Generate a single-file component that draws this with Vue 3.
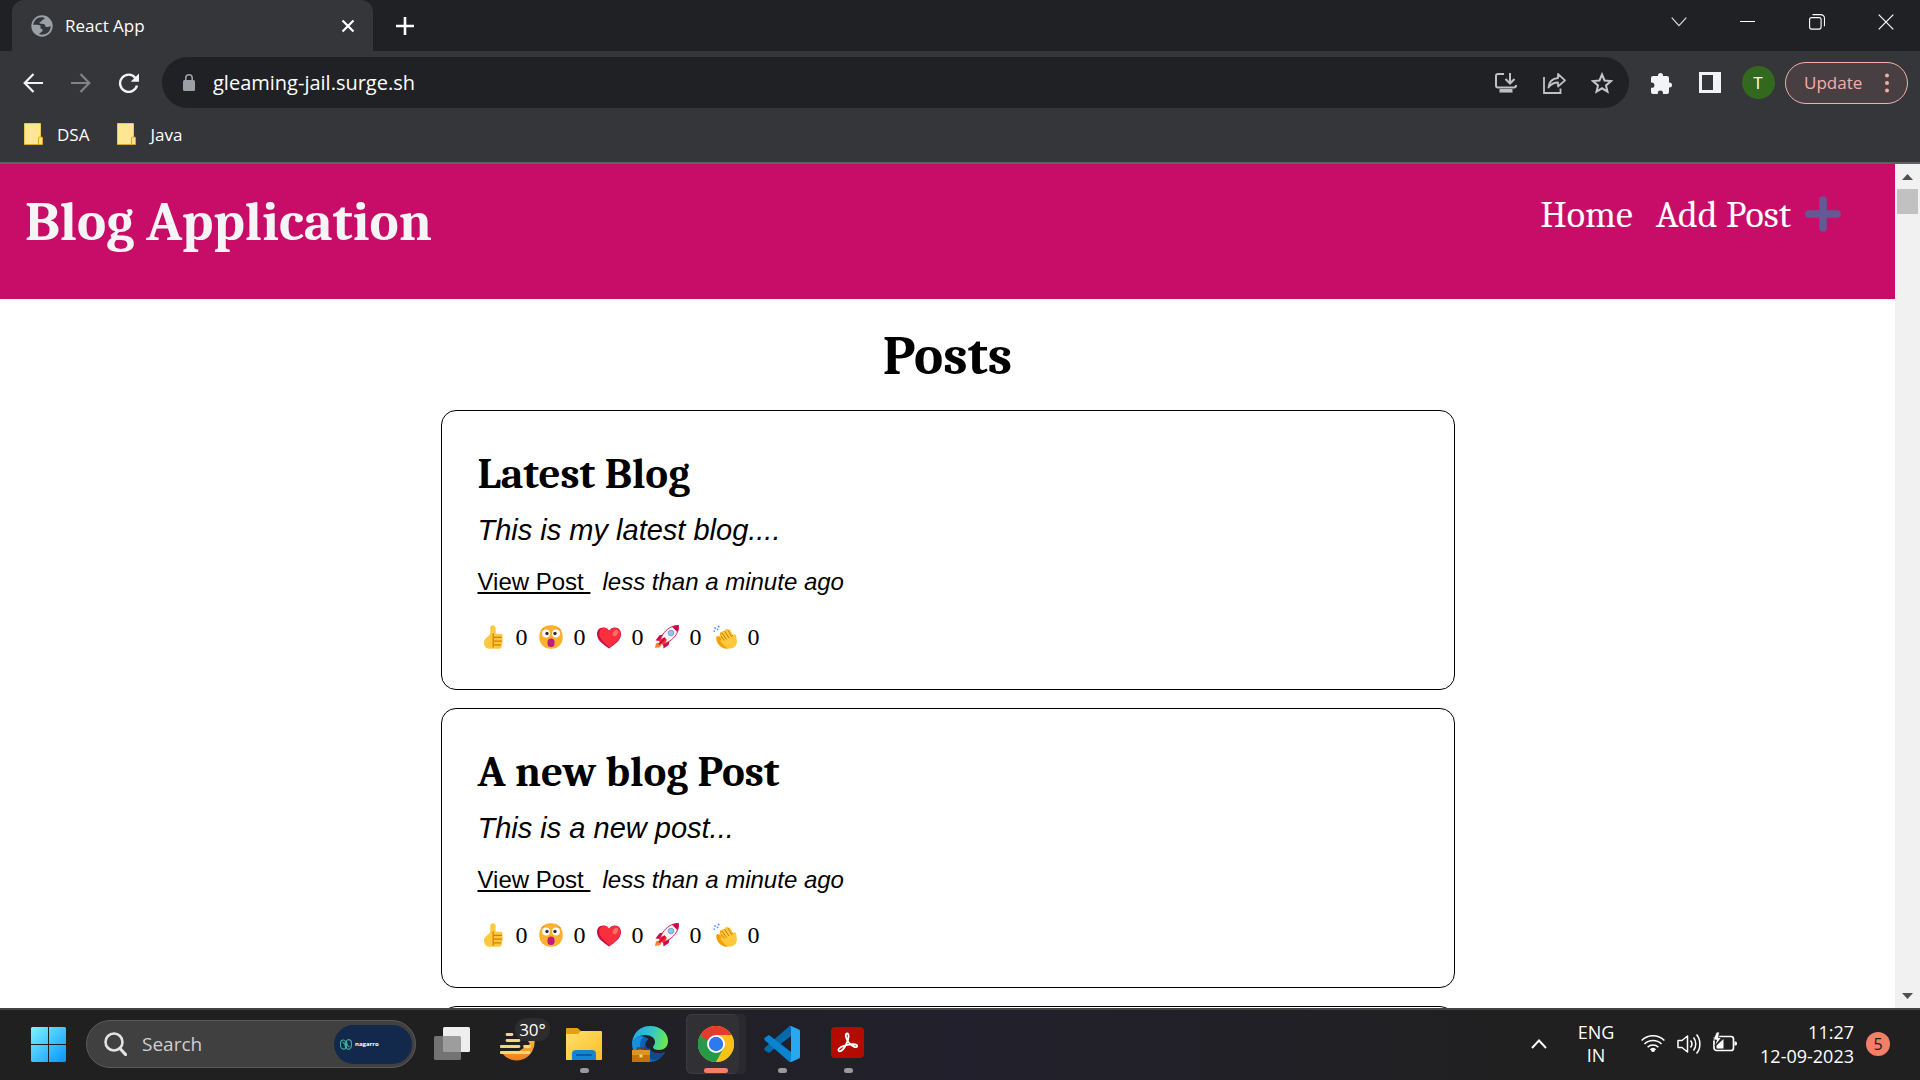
<script setup>
import { ref } from 'vue'

const url = ref('gleaming-jail.surge.sh')
const search = ref('')
const bookmarks = ['DSA', 'Java']
const reactions = ['thumb', 'wow', 'heart', 'rocket', 'clap']
const posts = [
  { id: 1, title: 'Latest Blog', excerpt: 'This is my latest blog....', age: 'less than a minute ago' },
  { id: 2, title: 'A new blog Post', excerpt: 'This is a new post...', age: 'less than a minute ago' },
  { id: 3 },
]
</script>

<template>
  <div class="desktop">
    <header class="tabs">
      <div class="tab">
        <svg class="globe" width="22" height="22" viewBox="0 0 22 22"><circle cx="11" cy="11" r="10.7" fill="#9aa0a6" /><path d="M2.300 10C2.600 5.500 6.500 2 11 2.300l2.500.4c.3 1.500-1 2-2.300 2.300-.5 1.800-1.900 1.900-2.900 2.300.2 1.700 2 1.500 4 1.600 1.800.2 2.100 1.700 2.200 2.900 1.200.4 3.500.2 5.200-.6.1 4.300-3.200 8-7.900 8.400-1.800.2-3.300-.2-3.800-.6l3.600-2.900c.3-1.600-.5-2.400-2-2.600-.8-1.300.5-2-.3-2.900-1.500-.9-4.500-1-7-.6z" fill="#35363a" /></svg>
        <span class="tab-title">React App</span>
        <button class="tab-close" aria-label="Close tab"><svg width="14" height="14" viewBox="0 0 14 14"><path d="M1.500 1.500l11 11M12.500 1.500l-11 11" stroke="#fff" stroke-width="2.200" /></svg></button>
      </div>
      <button class="new-tab" aria-label="New tab"><svg width="18" height="18" viewBox="0 0 18 18"><path d="M9 0v18M0 9h18" stroke="#fff" stroke-width="2.600" /></svg></button>
      <div class="window-controls">
        <button aria-label="Search tabs"><svg width="16" height="10" viewBox="0 0 16 10"><path d="M.7.700L8 8.700 15.300.7" fill="none" stroke="#ddd" stroke-width="1.200" /></svg></button>
        <button aria-label="Minimize"><svg width="15" height="2" viewBox="0 0 15 2"><path d="M0 .5h15" stroke="#fff" /></svg></button>
        <button aria-label="Restore"><svg width="16" height="16" viewBox="0 0 16 16" fill="none" stroke="#fff" stroke-width="1.100"><rect x=".6" y="3.600" width="11.500" height="11.500" rx="2" /><path d="M3.500.6h8.200a3.800 3.800 0 0 1 3.800 3.800v7.800" /></svg></button>
        <button aria-label="Close"><svg width="16" height="16" viewBox="0 0 16 16"><path d="M.7.700l14.600 14.600M15.300.7L.7 15.300" stroke="#fff" stroke-width="1.200" /></svg></button>
      </div>
    </header>

    <div class="toolbar">
      <button class="tool" aria-label="Back"><svg width="20" height="20" viewBox="0 0 20 20" fill="none" stroke="#f1f3f4" stroke-width="2.200"><path d="M20 10H2M10.500 1L1.700 10l8.800 9" /></svg></button>
      <button class="tool" aria-label="Forward"><svg width="20" height="20" viewBox="0 0 20 20" fill="none" stroke="#828387" stroke-width="2.200"><path d="M0 10h18M9.500 1l8.800 9-8.800 9" /></svg></button>
      <button class="tool" aria-label="Reload"><svg width="22" height="20" viewBox="0 0 22 20"><path d="M17.500 5A8.600 8.600 0 1 0 19 12.500" fill="none" stroke="#f1f3f4" stroke-width="2.400" /><path d="M21 .5v8.300h-8.300z" fill="#f1f3f4" /></svg></button>
      <form class="omnibox" @submit.prevent>
        <svg class="lock" width="12" height="17" viewBox="0 0 12 17"><rect y="6" width="12" height="11" rx="1.500" fill="#9aa0a6" /><path d="M2.800 7V4a3.200 3.200 0 0 1 6.400 0v3" fill="none" stroke="#9aa0a6" stroke-width="1.600" /></svg>
        <input v-model="url" class="url" aria-label="Address" />
        <button type="button" class="tool" aria-label="Install app"><svg width="22" height="21" viewBox="0 0 22 21" fill="none" stroke="#bfc1c4" stroke-width="2"><path d="M9 2H3a2 2 0 0 0-2 2v9.500a2 2 0 0 0 2 2h16a2 2 0 0 0 2-2V13M15 1v10M10.500 7l4.500 4.500L19.500 7" /><path d="M4.500 18.800h13" stroke-width="3.500" /></svg></button>
        <button type="button" class="tool" aria-label="Share"><svg width="23" height="22" viewBox="0 0 23 22" fill="none" stroke="#bfc1c4" stroke-width="1.800"><path d="M1 5v16h16.500v-4.500" /><path d="M15 6V2l7 6.300-7 6.200v-4c-4.500 0-7 1.500-9.500 5C6 10.500 9 6.500 15 6z" stroke-linejoin="round" /></svg></button>
        <button type="button" class="tool" aria-label="Bookmark"><svg width="22" height="22" viewBox="0 0 22 22"><path d="M11 2.500l2.500 6 6.500.6-5 4.300 1.500 6.300L11 16.300l-5.500 3.400L7 13.400 2 9.100l6.500-.6z" fill="none" stroke="#c4c6c9" stroke-width="2" /></svg></button>
      </form>
      <div class="extras">
        <button class="tool" aria-label="Extensions"><svg width="22" height="22" viewBox="0 0 22 22"><path d="M7 3.500a2.500 2.500 0 0 1 5 0V4h4a2 2 0 0 1 2 2v4.500h.5a2.500 2.500 0 0 1 0 5H18V20a2 2 0 0 1-2 2h-4v-.8a2.600 2.600 0 0 0-5.200 0v.8H2a2 2 0 0 1-2-2v-4.200h.8a2.600 2.600 0 0 0 0-5.200H0V6a2 2 0 0 1 2-2h5z" fill="#f1f3f4" /></svg></button>
        <button class="tool" aria-label="Side panel"><svg width="22" height="21" viewBox="0 0 22 21"><path fill-rule="evenodd" d="M0 0h22v21H0zM3 3v15h11V3z" fill="#f1f3f4" /></svg></button>
        <button class="tool" aria-label="Profile"><span class="avatar">T</span></button>
      </div>
      <button class="update">Update <svg width="4" height="20" viewBox="0 0 4 20" fill="#f6aea9"><circle cx="2" cy="2.500" r="2" /><circle cx="2" cy="10" r="2" /><circle cx="2" cy="17.500" r="2" /></svg></button>
    </div>

    <nav class="bookmarks">
      <a v-for="name in bookmarks" :key="name" href="#">
        <svg width="19" height="22" viewBox="0 0 19 22"><path d="M.5.500h16v21H.5z" fill="#ffe694" stroke="#ecc94b" /><path d="M14.500 21.500V15a1 1 0 0 1 1-1h2a1 1 0 0 1 1 1v6.500z" fill="#ffe082" stroke="#d9a91f" /><path d="M0 21.500h18" stroke="#d9a91f" /></svg>
        {{ name }}
      </a>
    </nav>

    <div class="viewport">
      <div class="page">
        <header class="banner">
          <h1>Blog Application</h1>
          <nav>
            <a href="#">Home</a>
            <a href="#">Add Post <svg width="36" height="36" viewBox="0 0 36 36"><path d="M18 4v28M4 18h28" stroke="#635994" stroke-width="7.600" stroke-linecap="round" /></svg></a>
          </nav>
        </header>
        <main>
          <h2 class="heading">Posts</h2>
          <article v-for="post in posts" :key="post.id" class="post">
            <template v-if="post.title">
              <h3>{{ post.title }}</h3>
              <p class="excerpt">{{ post.excerpt }}</p>
              <p class="meta"><a href="#">View Post&nbsp;</a><i>{{ post.age }}</i></p>
              <div class="reactions">
                <button v-for="kind in reactions" :key="kind" :aria-label="kind">
                  <svg width="24" height="24" viewBox="0 0 24 24">
                    <g v-if="kind === 'thumb'">
                      <path d="M9.300 2.800C9.300 1.300 10.300.300 11.800.300s2.800 1.100 2.800 2.800v5.700h4.700c2.300 0 3 2.300 1.700 3.600 1.300 1 1.100 2.900 0 3.600 1 1 .8 2.800-.3 3.400.7 2.300-.4 4.300-2.800 4.300H8.500C5 23.700 3 21 3 17.500c0-4.700 6.300-5.700 6.300-9.700z" fill="#ffc83d" />
                      <path d="M12.200 8.500v14M13 12.300h8M13 16.100h8M13 19.800h7" fill="none" stroke="#d67d00" stroke-width="1.200" />
                    </g>
                    <g v-else-if="kind === 'wow'">
                      <rect x=".3" y=".3" width="23.400" height="23.400" rx="10.500" fill="#ffb02e" />
                      <circle cx="7" cy="8.500" r="3.900" fill="#fff" /><circle cx="17" cy="8.500" r="3.900" fill="#fff" />
                      <circle cx="8" cy="8.500" r="1.700" fill="#402a32" /><circle cx="16" cy="8.500" r="1.700" fill="#402a32" />
                      <rect x="8.500" y="13.500" width="7" height="8.500" rx="3.500" fill="#bb1d80" />
                      <path d="M2 5.300l3.500-2.500M22 5.300l-3.500-2.500" stroke="#d67d00" stroke-width=".8" />
                    </g>
                    <g v-else-if="kind === 'heart'">
                      <path d="M6.200 2.500C2.500 2.500 0 5.300 0 9c0 6.500 6.500 10.500 12 14.500C17.500 19.500 24 15.500 24 9c0-3.700-2.500-6.500-6.200-6.500-2.500 0-4.600 1.300-5.800 3.300-1.200-2-3.300-3.300-5.800-3.300z" fill="#ca0b4a" />
                      <path d="M8 2.700C4.700 2.700 2.200 5 2.200 8.300 2.200 14 7.500 18 12.500 22.500 18 18.500 23.500 15 23.500 9c0-3.500-2.300-6-5.700-6-2.300 0-4.500 1.200-5.600 3.200C11.300 4.200 10 2.700 8 2.700z" fill="#f92f3d" />
                      <ellipse cx="18.500" cy="8" rx="2.300" ry="3.500" transform="rotate(32 18.500 8)" fill="#f37366" />
                    </g>
                    <g v-else-if="kind === 'rocket'">
                      <path d="M3 17.500C1 18 .5 19 .5 20.500L0 23l2.500-.5c2 0 3.200-.5 4-2.500z" fill="#ff822d" />
                      <path d="M8 9.500L4.500 10.300.5 15.500l5 .5zM14.500 16l-.8 4-5.200 3.500-.5-5z" fill="#ca0b4a" />
                      <path d="M23.500.5C17 .3 11.500 4 7.800 9.500L4.500 15.500l4 4 6-3.300C20.300 12.300 24 7 23.500.5z" fill="#f4f4f4" stroke="#ca0b4a" stroke-width=".9" />
                      <path d="M23.500.5c-2.500-.1-4.500.3-6.500 1.200l5.300 5.300c1-2 1.400-4 1.200-6.500z" fill="#ca0b4a" />
                      <path d="M5.200 14l4.300-1.600 2.400 2.300-2 4.300-2.700.8-3.100-3.100z" fill="#f8312f" /><path d="M10 13l-6 6.500" stroke="#ca0b4a" stroke-width="2" />
                      <circle cx="16" cy="8" r="2.800" fill="#83cbff" stroke="#7d93a7" stroke-width=".8" />
                    </g>
                    <g v-else>
                      <path d="M3.500 11.500c1-1 2-.5 3 .5l1-5 7 2L19 21c-3 4-9 3-12 0-2.500-2.500-4.500-6-3.500-9.500z" fill="#f59f00" />
                      <path d="M9 7.500C9 5.500 10.500 5.300 11.500 6.300l1-2c1-1 2.300-.5 2.600.700 1.300-1 2.500-.3 2.600 1l2.300 4c1-1.200 2.500-.8 3 .5 1 4 1.700 8-1 11-3 3-7.500 2.500-10 0L8 17c-1-1-.5-2.300.5-2.700L7 12.200c-.7-1.300.3-2.300 1.500-2.200z" fill="#ffc83d" />
                      <path d="M9 8l4.500 6.500M11.500 6l4.500 7M15 5l3.500 6.500L20 10M8 11l3.500 4.500" fill="none" stroke="#d67d00" stroke-width="1" />
                      <path d="M5 .8l1.300 1.500M1.300 2.500l1.500 1.200M.5 6l1.500.2M4 3.800l1 1.200" stroke="#5092ff" stroke-width="1.500" />
                    </g>
                  </svg>
                  <span>0</span>
                </button>
              </div>
            </template>
          </article>
        </main>
      </div>
      <div class="scrollbar" aria-hidden="true">
        <svg width="11" height="6" viewBox="0 0 11 6"><path d="M0 6L5.500 0 11 6z" fill="#505050" /></svg>
        <div class="thumb"></div>
        <svg width="11" height="6" viewBox="0 0 11 6"><path d="M0 0l5.500 6L11 0z" fill="#505050" /></svg>
      </div>
    </div>

    <footer class="taskbar">
      <button class="start" aria-label="Start">
        <svg width="35" height="35" viewBox="0 0 35 35"><defs><linearGradient id="win" x1="0" y1="0" x2="35" y2="35" gradientUnits="userSpaceOnUse"><stop stop-color="#7df3ff" /><stop offset="1" stop-color="#0793ff" /></linearGradient></defs><path d="M1 0h16v17H0V1zM18 0h16l1 1v16H18zM0 18h17v17H1l-1-1zM18 18h17v16l-1 1H18z" fill="url(#win)" /></svg>
      </button>
      <div class="search">
        <svg width="23" height="24" viewBox="0 0 23 24" fill="none" stroke="#e3e3e3"><circle cx="10" cy="10" r="8.500" stroke-width="2.600" /><path d="M16 16.500l5.500 6" stroke-width="3.200" stroke-linecap="round" /></svg>
        <input v-model="search" placeholder="Search" aria-label="Search" />
        <div class="brand">
          <svg width="12" height="11" viewBox="0 0 12 11" fill="none" stroke="#43a99b" stroke-width="1.100"><path d="M5.500 9.500c-2 1.500-5 .2-5-3V4c0-3 3.500-4.200 5-1.500v7zM2.500 3c2 1 3 4 3 6M6.500 2c1.500-2.500 5-1 5 1.500V6c0 4-3.500 5.500-5 3V2zM9.500 8c-2-1-3-4-3-6" /></svg>
          <b>nagarro</b>
        </div>
      </div>
      <div class="apps">
        <button aria-label="Task view"><svg width="36" height="36" viewBox="0 0 36 36"><rect x="9" y="1" width="27" height="25" rx="1.500" fill="#eee" /><rect y="10" width="27" height="24" rx="1.500" fill="#888" fill-opacity=".8" /></svg></button>
        <button aria-label="Weather">
          <svg width="36" height="36" viewBox="0 0 36 36"><defs><linearGradient id="sun" x1="0" y1="0" x2="0" y2="1"><stop stop-color="#f7bd45" /><stop offset="1" stop-color="#ed7d1c" /></linearGradient></defs><path d="M34.500 14.500A18 18 0 0 1 2 27h14l14-9-4-6z" fill="url(#sun)" /><path d="M7 8.500h5M7 14.500h12M1 20.500h18M24.500 20.500h5M1 26.500h28" stroke="#f5d482" stroke-width="2.800" stroke-linecap="round" /></svg>
          <span class="temp">30°</span>
        </button>
        <button class="running" aria-label="File Explorer"><svg width="36" height="36" viewBox="0 0 36 36"><defs><linearGradient id="folder" x1="0" y1="0" x2="1" y2="1"><stop stop-color="#ffdf70" /><stop offset="1" stop-color="#fbbf22" /></linearGradient></defs><path d="M0 3a1 1 0 0 1 1-1h10.500L15 5v6H0z" fill="#e2a20c" /><path d="M0 8h12l3-3h20a1 1 0 0 1 1 1v27a1 1 0 0 1-1 1H0z" fill="url(#folder)" /><path d="M6 34v-6a4 4 0 0 1 4-4h16a4 4 0 0 1 4 4v6z" fill="#1484d4" /><path d="M11 29h14" stroke="#0b5ba5" stroke-width="2" stroke-linecap="round" /></svg></button>
        <button aria-label="Microsoft Edge"><svg width="36" height="36" viewBox="0 0 36 36"><defs><linearGradient id="wave" x1="0" y1=".3" x2="1" y2=".5"><stop stop-color="#25a7e8" /><stop offset=".5" stop-color="#30c5d0" /><stop offset="1" stop-color="#6bea4b" /></linearGradient></defs><path d="M0 17c1-6 9-9 15-5 4 3 2 7 3 11 2 5 10 5 15 3-3 6-9 10-15 10C8 36 0 28 0 17z" fill="#0c63bd" /><path d="M0 17C1 7 8 0 18 0c11 0 18 7 18 15 0 6-4 9-9 9-4 0-6-1-6-3 0-1 2-2 2-5 0-4-4-7-10-7-7 0-11 4-13 8z" fill="url(#wave)" /><path d="M14 15c-4 7 0 17 8 19 5-1 9-4 11-8-7 3-16 1-15-6z" fill="#12488d" /><path d="M0 17c2-5 7-8 12-6-4 2-5 8-3 13H1z" fill="#168fde" /><ellipse cx="17.500" cy="18" rx="4" ry="4.500" fill="#1d2333" /><rect y="24" width="18" height="12" fill="#c5720b" /><path d="M0 24h18v5H0z" fill="#df941d" /><path d="M5.500 24v-2h7v2" fill="none" stroke="#6b3b08" stroke-width="1.500" /><path d="M7.500 28.500h3v3h-3z" fill="#ffd44f" /></svg></button>
        <button class="running active" aria-label="Google Chrome"><svg width="36" height="36" viewBox="0 0 36 36"><circle cx="18" cy="18" r="18" fill="#fbc116" /><path d="M2.400 9A18 18 0 0 1 33.600 9H18z" fill="#e33b2e" /><path d="M2.400 9A18 18 0 0 0 18 36l7.800-13.500L18 18 10.200 22.500z" fill="#259b48" /><path d="M2.400 9L10.200 22.500 18 9z" fill="#e33b2e" /><path d="M2.400 9l7.800 13.500L14 18z" fill="#259b48" /><path d="M33.600 9H18l7.800 13.500L18 36A18 18 0 0 0 33.600 9z" fill="#fbc116" /><circle cx="18" cy="18" r="9" fill="#fff" /><circle cx="18" cy="18" r="7.200" fill="#2c7bed" /></svg></button>
        <button class="running" aria-label="Visual Studio Code"><svg width="36" height="36" viewBox="0 0 36 36"><path d="M27 0v10L5 27 1 24.500c-1-.8-1-2 0-2.900L25 .500z" fill="#0669ac" /><path d="M27 36V26L5 9 1 11.500c-1 .8-1 2 0 2.900L25 35.500z" fill="#0c83cf" /><path d="M27 0l8 3.500c.7.300 1 1 1 1.700v25.600c0 .7-.3 1.400-1 1.700L27 36c-1 .2-1.500 0-2-.5.800.5 2 0 2-1.200V1.700c0-1.100-1-1.700-2-1.200.5-.5 1-.700 2-.5z" fill="#29a8f2" /></svg></button>
        <button class="running" aria-label="Adobe Acrobat"><svg width="36" height="36" viewBox="0 0 36 36"><rect x="1" y="1" width="33" height="31" rx="4" fill="#b30b00" /><path d="M17 7.500c2.200-.2 2.100 4.500-.2 9.500-2.200 5-5.300 8.300-7.300 8.300-2.300-.6-1-4 5-5.700 6.500-1.900 12.700-1.800 12.700.3 0 2.500-5 1-8.500-3.400-3-3.900-3.900-8.700-1.700-9z" fill="none" stroke="#fff" stroke-width="1.800" /></svg></button>
      </div>
      <div class="tray">
        <button class="more" aria-label="Show hidden icons"><svg width="16" height="10" viewBox="0 0 16 10"><path d="M1 9l7-7.500L15 9" fill="none" stroke="#fff" stroke-width="1.900" /></svg></button>
        <button class="lang">ENG<br />IN</button>
        <button class="status" aria-label="Network, sound and battery">
          <svg width="24" height="24" viewBox="0 0 24 24" fill="none" stroke="#fff" stroke-width="1.500"><path d="M.6 8.500a16 16 0 0 1 22.800 0M3.500 12a12 12 0 0 1 17 0M6.600 15.300a7.700 7.700 0 0 1 10.800 0" /><circle cx="12" cy="18" r="2" fill="#fff" stroke="none" /><path d="M9 17.500a4.500 4.500 0 0 1 6 0" stroke-width="1" /></svg>
          <svg width="24" height="24" viewBox="0 0 24 24" fill="none" stroke="#fff" stroke-width="1.500"><path d="M1 8.500h4L10.500 4v16L5 15.500H1z" stroke-linejoin="round" /><path d="M13.500 8.500c1.700 2 1.700 5 0 7M16.500 5.500c3 3.500 3 9.500 0 13M19.500 2.500c4.500 5 4.500 14 0 19" /></svg>
          <svg width="24" height="24" viewBox="0 0 24 24"><rect x="1" y="4.500" width="19.500" height="14" rx="2.500" fill="none" stroke="#fff" stroke-width="1.700" /><path d="M21.500 9.500h1a1.500 1.500 0 0 1 1.500 1.500v1a1.500 1.500 0 0 1-1.500 1.500h-1z" fill="#fff" /><path d="M3.500 16.500v-3L10.500 7v9.500z" fill="#fff" /><path d="M3.500 0L0 8h3.500L2 14l6.500-8.500H5.500L6.500 0z" fill="#fff" stroke="#202021" stroke-width=".8" /></svg>
        </button>
        <button class="clock">11:27<br />12-09-2023</button>
        <button class="badge" aria-label="5 notifications">5</button>
      </div>
    </footer>
  </div>
</template>

<style>
body {
  margin: 0;
  background: #fff;
}
</style>

<style scoped>
.desktop {
  display: flex;
  flex-direction: column;
  height: 100vh;
  overflow: hidden;
  font-family: "Segoe UI", "Open Sans", sans-serif;
  font-size: 17px;
  color: #fff;
}
button {
  display: flex;
  align-items: center;
  justify-content: center;
  margin: 0;
  padding: 0;
  border: 0;
  background: none;
  color: inherit;
  font: inherit;
}
input {
  min-width: 0;
  padding: 0;
  border: 0;
  outline: 0;
  background: none;
  color: inherit;
  font: inherit;
}
svg {
  display: block;
  flex: none;
}
h1, h2, h3, p {
  margin: 0;
}

/* Browser frame */
.tabs {
  display: flex;
  flex: none;
  height: 51px;
  padding-left: 12px;
  background: #202124;
}
.tab {
  display: flex;
  align-items: center;
  box-sizing: border-box;
  width: 361px;
  padding: 0 18px 0 19px;
  border-radius: 12px 12px 0 0;
  background: #35363a;
}
.tab-title {
  flex: 1;
  margin-left: 12px;
}
.new-tab {
  width: 64px;
}
.window-controls {
  display: flex;
  height: 43px;
  margin-left: auto;
}
.window-controls button {
  width: 69px;
}
.toolbar {
  display: flex;
  flex: none;
  align-items: center;
  height: 63px;
  padding: 0 12px 0 9px;
  background: #35363a;
}
.tool {
  width: 48px;
  height: 48px;
}
.omnibox {
  display: flex;
  flex: 1;
  align-items: center;
  height: 51px;
  margin: 0 9px;
  padding: 0 3px 0 21px;
  border-radius: 26px;
  background: #202124;
}
.url {
  flex: 1;
  margin-left: 18px;
  font-size: 20px;
}
.extras {
  display: flex;
}
.avatar {
  width: 33px;
  border-radius: 50%;
  background: #33691e;
  line-height: 33px;
}
.update {
  box-sizing: border-box;
  justify-content: space-between;
  width: 123px;
  height: 42px;
  margin-left: 3px;
  padding: 0 18px;
  border: 1px solid #f6aea9;
  border-radius: 21px;
  background: #483f42;
  color: #f6aea9;
}
.bookmarks {
  display: flex;
  flex: none;
  gap: 28px;
  height: 40px;
  padding: 0 24px 8px;
  border-bottom: 2px solid #5f6062;
  background: #35363a;
}
.bookmarks a {
  display: flex;
  align-items: center;
  gap: 14px;
  color: inherit;
  text-decoration: none;
}

/* Blog page */
.viewport {
  display: flex;
  flex: 1;
  min-height: 0;
}
.page {
  flex: 1;
  overflow: hidden;
  background: #fff;
  color: #000;
  font-family: Cambria, Caladea, "Liberation Serif", serif;
}
.banner {
  display: flex;
  justify-content: space-between;
  box-sizing: border-box;
  height: 135px;
  padding: 24px 54px 0 25px;
  background: #c80d69;
  color: #f5f5f5;
}
h1, .heading {
  font-size: 55px;
  line-height: 68px;
}
.banner nav {
  display: flex;
  gap: 23px;
  font-size: 38px;
  line-height: 54px;
}
.banner nav a {
  display: flex;
  gap: 14px;
  height: 54px;
  color: #fff;
  text-decoration: none;
}
.banner nav svg {
  margin-top: 8px;
}
.heading {
  margin: 23px 0 20px;
  text-align: center;
}
.post {
  box-sizing: border-box;
  max-width: 1014px;
  min-height: 280px;
  margin: 0 auto 18px;
  padding: 37px 36px 38px;
  border: 1px solid #000;
  border-radius: 15px;
}
.post h3 {
  font-size: 43px;
  line-height: 52px;
}
.excerpt {
  margin-top: 13px;
  font: italic 29px/34px "Liberation Sans", Arial, sans-serif;
}
.meta {
  display: flex;
  gap: 12px;
  margin-top: 21px;
  font: 24px/28px "Liberation Sans", Arial, sans-serif;
}
.meta a {
  color: #000;
}
.reactions {
  display: flex;
  gap: 11px;
  margin-top: 27px;
  padding-left: 3px;
  font: 24px/28px "Liberation Serif", serif;
}
.reactions button {
  gap: 11px;
}
.scrollbar {
  display: flex;
  flex-direction: column;
  align-items: center;
  box-sizing: border-box;
  width: 25px;
  padding: 10px 0 9px;
  background: #f1f1f1;
}
.thumb {
  width: 21px;
  height: 25px;
  margin: 9px 0 auto;
  background: #c1c1c1;
}

/* Taskbar */
.taskbar {
  display: flex;
  flex: none;
  align-items: center;
  height: 68px;
  padding: 0 30px 2px 31px;
  border-top: 2px solid #434343;
  background: linear-gradient(90deg, #202021 25%, #22202c 50%, #202021 78%);
}
.search {
  display: flex;
  align-items: center;
  box-sizing: border-box;
  width: 330px;
  height: 48px;
  margin: 0 3px 0 20px;
  padding: 0 3px 0 17px;
  border: 1px solid #5b5b5b;
  border-radius: 24px;
  background: #404040;
}
.search input {
  flex: 1;
  margin: 0 15px;
  color: #d0d0d0;
  font-size: 19px;
}
.search input::placeholder {
  color: #d0d0d0;
  opacity: 1;
}
.brand {
  display: flex;
  align-items: center;
  gap: 3px;
  box-sizing: border-box;
  width: 78px;
  height: 39px;
  padding-left: 6px;
  border-radius: 20px;
  background: #13294b;
  font-size: 6px;
}
.apps {
  display: flex;
}
.apps button {
  position: relative;
  width: 66px;
  height: 60px;
}
.temp {
  position: absolute;
  top: 4px;
  right: 1px;
  width: 35px;
  border-radius: 12px;
  background: #2d2d2d;
  line-height: 23px;
}
.running::after {
  content: "";
  position: absolute;
  bottom: 1px;
  width: 9px;
  height: 5px;
  border-radius: 3px;
  background: #9a9a9c;
}
.apps .active {
  width: 60px;
  margin: 0 3px;
  border-radius: 6px;
  background: #303035;
  box-shadow: inset -7px 0 0 #29292e, inset 0 0 0 1px #3c3c41;
}
.active::after {
  width: 24px;
  background: #f47f66;
}
.tray {
  display: flex;
  align-items: center;
  margin-left: auto;
  font-size: 18px;
}
.lang {
  width: 60px;
  margin: 0 15px 0 19px;
  line-height: 23px;
}
.status {
  gap: 12px;
}
.clock {
  margin: 0 12px 0 23px;
  line-height: 24px;
  text-align: right;
}
.badge {
  width: 24px;
  height: 24px;
  border-radius: 50%;
  background: #f47f66;
  color: #1b1b1b;
  font-size: 16px;
}
</style>
